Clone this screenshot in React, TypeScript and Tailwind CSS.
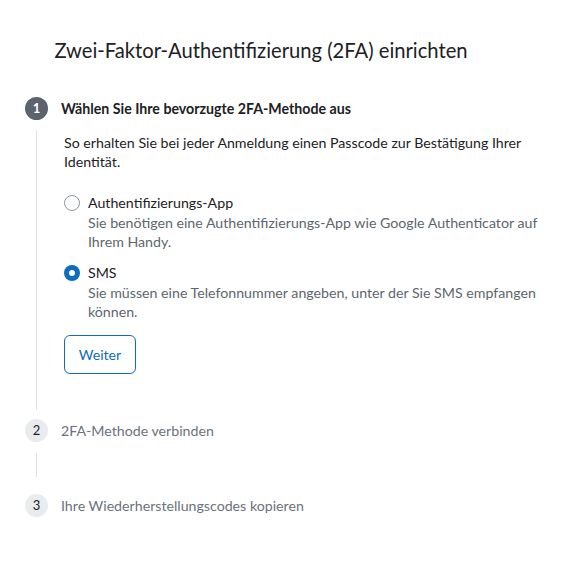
import type { ReactNode } from 'react';

/* ── 2FA setup wizard ──────────────────────────────────────────────────────
   Vertical stepper: numbered circle + label per step, the active step's body
   hangs off a hairline on the left. Only step 1 is expanded. */

type Method = 'app' | 'sms';

const methods: { id: Method; label: string; help: string }[] = [
  {
    id: 'app',
    label: 'Authentifizierungs-App',
    help: 'Sie benötigen eine Authentifizierungs-App wie Google Authenticator auf Ihrem Handy.',
  },
  {
    id: 'sms',
    label: 'SMS',
    help: 'Sie müssen eine Telefonnummer angeben, unter der Sie SMS empfangen können.',
  },
];

function StepBadge({ n, active }: { n: number; active?: boolean }) {
  return (
    <span
      className={
        active
          ? 'flex h-[23px] w-[23px] shrink-0 items-center justify-center rounded-full bg-[#5b646c] text-[13px] font-bold text-white'
          : 'flex h-[23px] w-[23px] shrink-0 items-center justify-center rounded-full bg-[#e9ecef] text-[13px] text-[#1d2125]'
      }
    >
      {n}
    </span>
  );
}

function StepHeader({ n, label, active }: { n: number; label: string; active?: boolean }) {
  return (
    <div className="flex h-[22px] items-center gap-[13px]">
      <StepBadge n={n} active={active} />
      <span className={active ? 'font-bold text-[#1d2125]' : 'text-[#6a737b]'}>{label}</span>
    </div>
  );
}

function Rail({ className, children }: { className: string; children?: ReactNode }) {
  return <div className={'ml-[11px] border-l border-[#dee2e6] ' + className}>{children}</div>;
}

function Radio({ checked }: { checked: boolean }) {
  return checked ? (
    <span className="flex h-4 w-4 shrink-0 items-center justify-center rounded-full bg-[#0f6cbf]">
      <span className="h-[6px] w-[6px] rounded-full bg-white" />
    </span>
  ) : (
    <span className="h-4 w-4 shrink-0 rounded-full border border-[#8f959e] bg-white" />
  );
}

export default function App() {
  const selected: Method = 'sms';

  return (
    <div className="min-h-[567px] bg-white font-['Lato',sans-serif] text-[14.2px] leading-[19px] text-[#1d2125]">
      <h2 className="pr-[61px] pt-[36px] text-center text-[20.2px] leading-[28px] font-normal">
        Zwei-Faktor-Authentifizierung (2FA) einrichten
      </h2>

      <div className="mt-[33px] pl-[25px] pr-[40px]">
        <StepHeader n={1} label="Wählen Sie Ihre bevorzugte 2FA-Methode aus" active />
        <Rail className="mt-[11px] mb-[9px] pl-[27px] pt-[3px] pb-[36px]">
          <p>So erhalten Sie bei jeder Anmeldung einen Passcode zur Bestätigung Ihrer Identität.</p>

          <div className="mt-[22px] flex flex-col gap-[12px]">
            {methods.map((m) => (
              <label key={m.id} className="flex gap-2">
                <span className="flex h-[20px] items-center">
                  <Radio checked={m.id === selected} />
                </span>
                <span className="flex flex-col">
                  <span className="leading-[20px]">{m.label}</span>
                  <span className="text-[#5d666e]">{m.help}</span>
                </span>
              </label>
            ))}
          </div>

          <button className="mt-[14px] h-[39px] w-[72px] rounded-[6px] border border-[#0f6cbf] text-[#0f6cbf]">
            Weiter
          </button>
        </Rail>

        <StepHeader n={2} label="2FA-Methode verbinden" />
        <Rail className="mt-[12px] mb-[17px] h-[24px]" />

        <StepHeader n={3} label="Ihre Wiederherstellungscodes kopieren" />
      </div>
    </div>
  );
}
